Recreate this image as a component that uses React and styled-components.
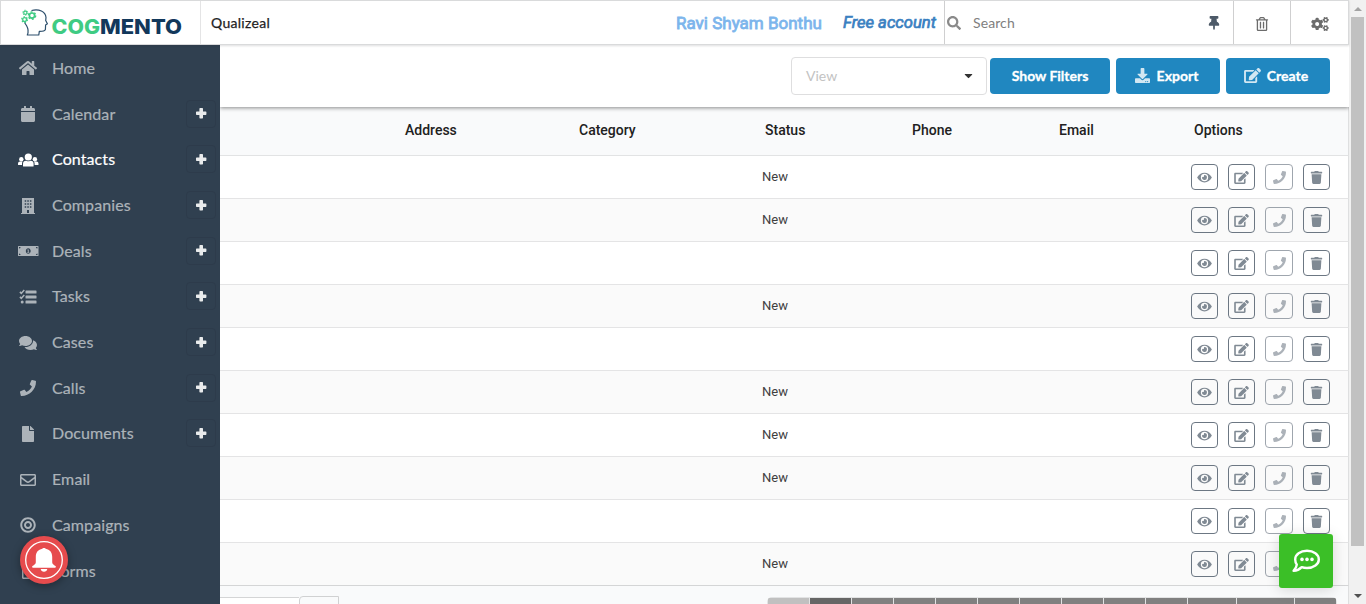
import React from "react";
import styled, { createGlobalStyle, css } from "styled-components";
import {
  FaHome, FaCalendar, FaComments, FaPhone,
  FaFile, FaRegEnvelope, FaBullseye, FaRegFileAlt, FaSearch, FaThumbtack,
  FaRegTrashAlt, FaCogs, FaDownload, FaEdit, FaEye, FaTrash, FaCaretDown,
} from "react-icons/fa";

const GlobalStyle = createGlobalStyle`
  * { box-sizing: border-box; }
  body { margin: 0; overflow: hidden; background: #fff; }
  svg { display: block; flex: none; }
`;

const lato = "Lato, 'Liberation Sans', sans-serif";
const roboto = "Roboto, 'Liberation Sans', sans-serif";

const Screen = styled.div`
  display: flex;
  width: 1366px;
  height: 604px;
  overflow: hidden;
  position: relative;
  font-family: ${lato};
`;
const Page = styled.div`
  flex: 1;
  min-width: 0;
  display: flex;
  flex-direction: column;
`;
const TopBar = styled.header`
  flex: none;
  display: flex;
  height: 45px;
  border: 1px solid #d9dadb;
  background: #fff;
  box-shadow: 0 1px 2px rgba(34, 36, 38, 0.15);
  position: relative;
  z-index: 2;
`;
const Brand = styled.div`
  width: 200px;
  padding: 7px 0 0 18px;
  border-right: 1px solid #e4e4e5;
`;
const Company = styled.div`
  flex: 1;
  padding: 13px 0 0 10px;
  font-size: 14px;
  line-height: 17px;
  letter-spacing: 0.3px;
  color: #1e1e1f;
  -webkit-text-stroke: 0.25px #1e1e1f;
`;
const UserName = styled.div`
  width: 166px;
  padding-top: 11px;
  font: 400 17px/22px ${roboto};
  color: #7cb5ec;
  -webkit-text-stroke: 0.8px #7cb5ec;
  white-space: nowrap;
`;
const Plan = styled.div`
  width: 102px;
  padding: 12px 0 0 1px;
  font: italic 400 16.6px/19px ${roboto};
  color: #3a80c1;
  -webkit-text-stroke: 0.7px #3a80c1;
  white-space: nowrap;
`;
const Search = styled.div`
  width: 289px;
  display: flex;
  align-items: center;
  gap: 12px;
  padding: 0 11px 0 2px;
  border-left: 1px solid #cfcfd0;
  font-size: 14px;
  letter-spacing: 0.1px;
  color: #808080;
  & > span { flex: 1; }
  & > svg { height: 14px; width: 14px; color: #8a8a8a; }
  & > svg:last-child { color: #4d5a68; width: 16px; }
`;
const TopIcon = styled.div`
  width: ${(p) => p.$w}px;
  display: flex;
  align-items: center;
  justify-content: center;
  padding-top: 2px;
  border-left: 1px solid #cfcfd0;
  color: #6c6c6c;
  svg { height: 14px; width: 18px; }
`;
const Body = styled.div`
  flex: 1;
  min-height: 0;
  display: flex;
`;
const Sidebar = styled.nav`
  width: 220px;
  flex: none;
  padding-top: 0.6px;
  background: #304050;
  overflow: hidden;
`;
const NavItem = styled.div`
  display: flex;
  align-items: center;
  height: 45.7px;
  padding: 0 4px 0 12px;
  font-size: 16px;
  letter-spacing: 0.1px;
  color: ${(p) => (p.$active ? "#fff" : "#acb3b9")};
  -webkit-text-stroke: 0.2px currentColor;
`;
const NavIcon = styled.span`
  width: 32px;
  display: flex;
  justify-content: center;
  svg { height: 16px; width: ${(p) => (p.$wide ? 22 : 20)}px; stroke: none; }
`;
const NavLabel = styled.span`
  flex: 1;
  padding-left: 8px;
  margin-top: -2px;
`;
const AddButton = styled.span`
  width: 30px;
  height: 28px;
  margin-top: -1px;
  display: flex;
  align-items: center;
  justify-content: center;
  border: 1px solid #2d3b4b;
  border-radius: 4px;
  color: #e9ebec;
`;
const Main = styled.main`
  flex: 1;
  min-width: 0;
  display: flex;
  flex-direction: column;
  background: #f9fafb;
  overflow: hidden;
`;
const Toolbar = styled.div`
  flex: none;
  display: flex;
  justify-content: flex-end;
  height: 62px;
  padding: 12px 19px 0 0;
  background: #fff;
  box-shadow: 0 1px 4px rgba(0, 0, 0, 0.45);
  position: relative;
`;
const Select = styled.div`
  width: 196px;
  height: 38px;
  display: flex;
  align-items: center;
  justify-content: space-between;
  padding: 0 11px 2px 14px;
  margin-right: 3px;
  border: 1px solid #dededf;
  border-radius: 4px;
  font-size: 14px;
  color: #c3c3c3;
  svg { height: 13px; width: 13px; color: #333; }
`;
const Button = styled.div`
  width: ${(p) => p.$w}px;
  height: 36px;
  margin: 1px 0 0 ${(p) => p.$gap || 0}px;
  padding: 0 ${(p) => (p.$gap ? 4 : 0)}px 1px 0;
  display: flex;
  align-items: center;
  justify-content: center;
  gap: 6px;
  border-radius: 4px;
  background: #2087c0;
  color: #fff;
  font-size: 14px;
  font-weight: 700;
  -webkit-text-stroke: 0.3px #fff;
  svg { height: 15px; width: 17px; opacity: 0.8; stroke: none; }
`;
const columns = css`
  display: grid;
  grid-template-columns: 185px 174px 186px 147px 147px 135px 1fr;
  border-right: 1px solid #dedfe0;
`;
const HeadRow = styled.div`
  ${columns}
  flex: none;
  height: 49px;
  padding-top: 14px;
  border-bottom: 1px solid #e2e3e4;
  font: 500 14px/19px ${roboto};
  color: #212121;
`;
const Row = styled.div`
  ${columns}
  flex: none;
  height: 43px;
  align-items: center;
  background: ${(p) => (p.$odd ? "#fafafa" : "#fff")};
  border-bottom: 1px solid ${(p) => (p.$last ? "#d4d5d6" : "#e4e4e5")};
`;
const Status = styled.span`
  grid-column: 4;
  margin-left: -3px;
  font: 400 13px/18px ${roboto};
  color: #3f3f3f;
`;
const Actions = styled.div`
  grid-column: 7;
  display: flex;
  margin-left: -3px;
  gap: 10px;
`;
const Action = styled.span`
  width: ${(p) => (p.$faded ? 28 : 27)}px;
  height: 26px;
  display: flex;
  align-items: center;
  justify-content: center;
  border: 1px solid #6c7783;
  border-radius: 4px;
  color: #808a94;
  opacity: ${(p) => (p.$faded ? 0.65 : 1)};
  svg { height: 13px; width: 15px; }
`;
const Footer = styled.div`
  flex: 1;
  display: flex;
  border-right: 1px solid #dedfe0;
  padding-top: 10px;
`;
const PageSize = styled.div`
  width: 79px;
  height: 38px;
  margin-top: 1px;
  background: #fff;
  border-top: 1px solid #d4d5d6;
`;
const PageSizeButton = styled.div`
  width: 40px;
  height: 38px;
  border: 1px solid #d0d1d2;
  border-radius: 4px 0 0 4px;
`;
const Pager = styled.div`
  display: flex;
  gap: 1px;
  height: 38px;
  width: 570px;
  margin: 1px 0 0 428px;
  padding: 1px 0 0 1px;
  border-radius: 5px;
  overflow: hidden;
  background: #e2e3e4;
`;
const PageCell = styled.div`
  width: ${(p) => p.$w}px;
  background: ${(p) => p.$bg || "#808080"};
`;
const ScrollBar = styled.div`
  width: 17px;
  flex: none;
  display: flex;
  flex-direction: column;
  align-items: center;
  padding: 7px 0 6px;
  background: #f1f1f1;
`;
const Arrow = styled.div`
  border: 4px solid transparent;
  ${(p) => (p.$up ? "border-top: 0; border-bottom-color: #a3a3a3;" : "border-bottom: 0; border-top-color: #505050;")}
`;
const Thumb = styled.div`
  width: 13px;
  height: 529px;
  margin: 6px 0 auto;
  background: #c1c1c1;
`;
const Bell = styled.div`
  position: absolute;
  left: 20px;
  top: 536px;
  z-index: 3;
  border-radius: 50%;
  box-shadow: 0 2px 8px rgba(0, 0, 0, 0.35);
`;
const Chat = styled.div`
  position: absolute;
  left: 1279px;
  top: 534px;
  z-index: 3;
  width: 54px;
  height: 54px;
  display: flex;
  align-items: center;
  justify-content: center;
  border-radius: 3px;
  background: #3bbf27;
  box-shadow: 0 2px 14px rgba(0, 0, 0, 0.15);
`;

function Logo() {
  return (
    <svg width="166" height="35" viewBox="0 0 166 35">
      <g fill="none" stroke="#2d4f6c" strokeWidth="1.2" strokeLinejoin="round">
        <path d="M12.500 2.500C20 .6 26.500 3.500 27 9.500L26.700 12.500L28.400 15.800L26.600 17L26.400 21.500Q25.500 23.500 20.300 23.400L19.800 27H8.300Q10.300 22.500 7.600 17.800L5.500 14.500" />
      </g>
      <g fill="none" stroke="#3fcb83">
        <circle cx="13" cy="7.600" r="2.600" strokeWidth="1.700" />
        <circle cx="13" cy="7.600" r="3.700" strokeWidth="1.300" strokeDasharray="1.940 1.940" />
        <circle cx="6.300" cy="4.700" r="1.600" strokeWidth="1.200" />
        <circle cx="6.300" cy="4.700" r="2.500" strokeWidth="1" strokeDasharray="1.310 1.310" />
        <circle cx="5.600" cy="11.600" r="1.900" strokeWidth="1.300" />
        <circle cx="5.600" cy="11.600" r="2.900" strokeWidth="1.100" strokeDasharray="1.520 1.520" />
      </g>
      <g fontFamily="Inter, sans-serif" fontWeight="800" fontSize="20.400">
        <text x="32.500" y="26.400" fill="#3fcb83" textLength="48.500" lengthAdjust="spacingAndGlyphs">COG</text>
        <text x="81" y="26.400" fill="#12385b" textLength="82" lengthAdjust="spacingAndGlyphs">MENTO</text>
      </g>
    </svg>
  );
}

function Plus() {
  return (
    <svg width="11" height="11" viewBox=".3 .3 11 11">
      <path fill="currentColor" d="M4.400.3h2.200q.7 0 .7.700v2.700H10q.7 0 .7.700v2.200q0 .7-.7.700H7.300V10q0 .7-.7.700H4.400q-.7 0-.7-.7V7.300H1q-.7 0-.7-.7V4.400q0-.7.700-.7h2.700V1q0-.7.700-.7z" />
    </svg>
  );
}

function People() {
  return (
    <svg viewBox="0 0 22 16" fill="currentColor">
      <circle cx="11.300" cy="5" r="3.600" />
      <path d="M6 14v-2.300q0-3 3-3h.3q2 1 4 0h.3q3 0 3 3V14q0 .5-.5.500H6.500Q6 14.500 6 14z" />
      <circle cx="4.300" cy="7.200" r="2.200" />
      <circle cx="17.900" cy="7.200" r="2.200" />
      <path d="M1 12.500v-1q0-2 2-2h2.600q-.6.900-.6 2.200V13H1.500q-.5 0-.5-.5zM21.500 12.500v-1q0-2-2-2h-2.600q.7.900.7 2.200V13H21q.5 0 .5-.5z" />
    </svg>
  );
}

function Building() {
  return (
    <svg viewBox="0 0 20 16" fill="currentColor" fillRule="evenodd">
      <path d="M4 0h12v15h1v1H3v-1h1zM6.700 2.200v1.500h1.500V2.200zm2.600 0v1.500h1.500V2.200zm2.600 0v1.500h1.500V2.200zM6.700 5.200v1.500h1.500V5.200zm2.600 0v1.500h1.500V5.200zm2.600 0v1.500h1.500V5.200zM6.700 8.200v1.500h1.500V8.200zm2.600 0v1.500h1.500V8.200zm2.600 0v1.500h1.500V8.200zM9 12v3h2v-3z" />
    </svg>
  );
}

function Banknote() {
  return (
    <svg viewBox="0 0 22 16" fill="currentColor" fillRule="evenodd">
      <path d="M1.500 3h19.500q.5 0 .5.500v9q0 .5-.5.500H1.500q-.5 0-.5-.5v-9Q1 3 1.500 3zM2 5.600Q3.600 5.600 3.600 4H2zM20.500 5.600Q18.900 5.600 18.900 4h1.600zM2 10.400Q3.600 10.400 3.600 12H2zM20.500 10.400Q18.900 10.400 18.900 12h1.600zM11.250 5.200C9.900 5.200 8.800 6.400 8.800 8s1.100 2.800 2.450 2.800S13.700 9.600 13.700 8s-1.100-2.800-2.450-2.800zM10.500 6.500h1.200v2.500h.6v.8h-2v-.8h.5V7.300h-.5z" />
    </svg>
  );
}

function Checklist() {
  return (
    <svg viewBox="0 0 20 16">
      <g fill="currentColor">
        <rect x="7.500" y="1.500" width="11" height="3" rx=".6" />
        <rect x="7.500" y="6.500" width="11" height="3" rx=".6" />
        <rect x="7.500" y="11.500" width="11" height="3" rx=".6" />
        <circle cx="4.200" cy="13" r="1.500" />
      </g>
      <path fill="none" stroke="currentColor" strokeWidth="1.500" d="M1.900 2.900l1.400 1.400L6.300 1.100M1.900 7.900l1.400 1.400L6.300 6.100" />
    </svg>
  );
}

function Bubble() {
  return (
    <svg width="30" height="26" viewBox="0 0 30 26">
      <path fill="none" stroke="#fff" strokeWidth="2.400" strokeLinejoin="round" d="M16 2.800c6.700 0 11.800 3.700 11.800 8.600S22.700 20 16 20c-1.900 0-3.700-.3-5.300-.9C8.500 21.300 6 22.600 2.600 22.900c1.700-1.900 2.900-3.700 3.200-6.300-1-1.500-1.600-3.300-1.600-5.200C4.200 6.500 9.300 2.800 16 2.800z" />
      <g fill="#fff">
        <circle cx="11" cy="11.400" r="1.800" />
        <circle cx="16" cy="11.400" r="1.800" />
        <circle cx="21" cy="11.400" r="1.800" />
      </g>
    </svg>
  );
}

const nav = [
  ["Home", FaHome, false],
  ["Calendar", FaCalendar, true],
  ["Contacts", People, true, true],
  ["Companies", Building, true],
  ["Deals", Banknote, true, true],
  ["Tasks", Checklist, true],
  ["Cases", FaComments, true],
  ["Calls", FaPhone, true],
  ["Documents", FaFile, true],
  ["Email", FaRegEnvelope, false],
  ["Campaigns", FaBullseye, false],
  ["Forms", FaRegFileAlt, false],
];
const statuses = ["New", "New", "", "New", "", "New", "New", "New", "", "New"];
const pages = [
  [41, "#c0c0c0"], [41, "#666"], [41], [41], [41], [41], [41], [41], [41], [41], [48], [57], [41],
];

export default function App() {
  return (
    <Screen>
      <GlobalStyle />
      <Page>
        <TopBar>
          <Brand><Logo /></Brand>
          <Company>Qualizeal</Company>
          <UserName>Ravi Shyam Bonthu</UserName>
          <Plan>Free account</Plan>
          <Search><FaSearch /><span>Search</span><FaThumbtack /></Search>
          <TopIcon $w={57}><FaRegTrashAlt /></TopIcon>
          <TopIcon $w={58}><FaCogs /></TopIcon>
        </TopBar>
        <Body>
          <Sidebar>
            {nav.map(([label, Icon, add, wide]) => (
              <NavItem key={label} $active={label === "Contacts"}>
                <NavIcon $wide={wide}><Icon /></NavIcon>
                <NavLabel>{label}</NavLabel>
                {add && <AddButton><Plus /></AddButton>}
              </NavItem>
            ))}
          </Sidebar>
          <Main>
            <Toolbar>
              <Select>View<FaCaretDown /></Select>
              <Button $w={120}>Show Filters</Button>
              <Button $w={104} $gap={6}><FaDownload />Export</Button>
              <Button $w={104} $gap={6}><FaEdit />Create</Button>
            </Toolbar>
            <HeadRow>
              <span />
              <span>Address</span>
              <span>Category</span>
              <span>Status</span>
              <span>Phone</span>
              <span>Email</span>
              <span>Options</span>
            </HeadRow>
            {statuses.map((status, i) => (
              <Row key={i} $odd={i % 2 === 1} $last={i === 9}>
                <Status>{status}</Status>
                <Actions>
                  <Action><FaEye /></Action>
                  <Action><FaEdit /></Action>
                  <Action $faded><FaPhone /></Action>
                  <Action><FaTrash /></Action>
                </Actions>
              </Row>
            ))}
            <Footer>
              <PageSize />
              <PageSizeButton />
              <Pager>
                {pages.map(([w, bg], i) => <PageCell key={i} $w={w} $bg={bg} />)}
              </Pager>
            </Footer>
          </Main>
        </Body>
      </Page>
      <ScrollBar><Arrow $up /><Thumb /><Arrow /></ScrollBar>
      <Bell>
        <svg width="48" height="48" viewBox="0 0 48 48">
          <circle cx="24" cy="24" r="24" fill="#e64b4d" />
          <circle cx="24" cy="24" r="18.300" fill="none" stroke="#fff" strokeWidth="1.300" />
          <path fill="#fff" d="M24 12c.9 0 1.600.3 1.700.8 4 .8 6.500 3.500 6.500 8v5.500c0 1.700 1.500 2.700 3.300 3.700.7.400.4 1.700-.5 1.700H13c-.9 0-1.200-1.300-.5-1.700 1.800-1 3.300-2 3.300-3.700v-5.500c0-4.500 2.500-7.200 6.500-8 .1-.5.800-.8 1.700-.8zM20.700 33h6.600c-.3 1.700-1.600 2.800-3.300 2.800s-3-1.100-3.300-2.800z" />
        </svg>
      </Bell>
      <Chat><Bubble /></Chat>
    </Screen>
  );
}
